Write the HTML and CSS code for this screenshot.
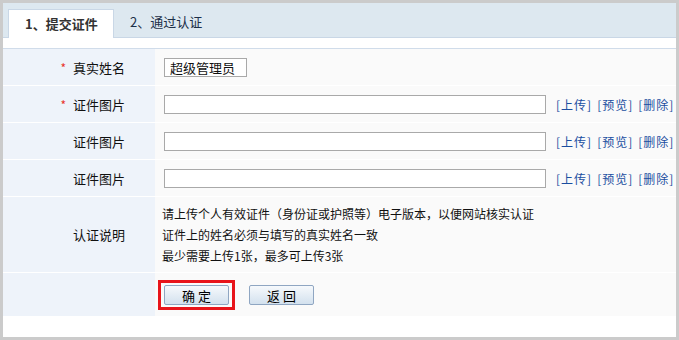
FILE: index.html
```html
<!DOCTYPE html>
<html lang="zh-CN">
<head>
  <meta charset="UTF-8" />
  <title>实名认证</title>
  <link rel="stylesheet" href="styles.css">
</head>
<body>
  <div class="panel">
    <div class="tabs">
      <div class="tab active">1、提交证件</div>
      <div class="tab">2、通过认证</div>
    </div>

    <div class="form">
      <div class="row">
        <div class="label"><span class="req">*</span>真实姓名</div>
        <div class="field"><input type="text" class="name-input" value="超级管理员"></div>
      </div>

      <div class="row">
        <div class="label"><span class="req">*</span>证件图片</div>
        <div class="field">
          <input type="text" class="file-input">
          <span class="links"><a href="#">[上传]</a><a href="#">[预览]</a><a href="#">[删除]</a></span>
        </div>
      </div>

      <div class="row">
        <div class="label">证件图片</div>
        <div class="field">
          <input type="text" class="file-input">
          <span class="links"><a href="#">[上传]</a><a href="#">[预览]</a><a href="#">[删除]</a></span>
        </div>
      </div>

      <div class="row">
        <div class="label">证件图片</div>
        <div class="field">
          <input type="text" class="file-input">
          <span class="links"><a href="#">[上传]</a><a href="#">[预览]</a><a href="#">[删除]</a></span>
        </div>
      </div>

      <div class="row tall">
        <div class="label">认证说明</div>
        <div class="field notes">
          <p>请上传个人有效证件（身份证或护照等）电子版本，以便网站核实认证</p>
          <p>证件上的姓名必须与填写的真实姓名一致</p>
          <p>最少需要上传1张，最多可上传3张</p>
        </div>
      </div>

      <div class="row actions">
        <div class="label"></div>
        <div class="field">
          <span class="highlight"><button class="btn">确 定</button></span>
          <button class="btn">返 回</button>
        </div>
      </div>
    </div>
  </div>
</body>
</html>
```

FILE: styles.css
```css
* {
  box-sizing: border-box;
  margin: 0;
  padding: 0;
}

html, body {
  height: 100%;
}

body {
  background: #cbcbcb;
  padding: 3px;
  font-family: "Noto Sans CJK SC", "DejaVu Sans", sans-serif;
  font-size: 12px;
  color: #222;
}

.panel {
  background: #fff;
  height: 334px;
}

/* tabs */
.tabs {
  height: 35px;
  background: #dde8f0;
  border-bottom: 1px solid #c9d7e6;
  display: flex;
  align-items: flex-end;
  padding-left: 5px;
}

.tab {
  height: 29px;
  line-height: 28px;
  padding: 0 16px;
  font-size: 13px;
  color: #1c2f48;
  white-space: nowrap;
}

.tab.active {
  width: 106px;
  padding: 0 0 0 16px;
  background: #fff;
  border: 1px solid #c9d7e6;
  border-bottom: none;
  margin-bottom: -1px;
  font-weight: bold;
  color: #333;
}

/* form */
.form {
  margin-top: 10px;
  border-top: 1px solid #d0dcea;
}

.row {
  display: grid;
  grid-template-columns: 152px 1fr;
  height: 37px;
  border-bottom: 1px solid #fff;
}

.row.tall {
  height: 76px;
}

.row.actions {
  height: 43px;
  border-bottom: none;
}

.label {
  background: #eef3fa;
  display: flex;
  align-items: center;
  justify-content: flex-end;
  padding-right: 30px;
  font-size: 13px;
  color: #111;
}

.req {
  color: #e8322c;
  font-size: 12px;
  margin-right: 7px;
}

.field {
  background: #fafafa;
  display: flex;
  align-items: center;
  padding-left: 9px;
  min-width: 0;
}

input {
  height: 19px;
  border: 1px solid #a9a9a9;
  background: #fff;
  font-family: inherit;
  font-size: 13px;
  color: #111;
  padding: 0 5px;
  outline: none;
}

.name-input {
  width: 83px;
}

.file-input {
  width: 382px;
  flex-shrink: 0;
}

.links {
  margin-left: 10px;
  display: flex;
  gap: 5px;
  white-space: nowrap;
  flex-shrink: 0;
}

.links a {
  color: #1a4ea0;
  text-decoration: none;
  font-size: 12px;
  letter-spacing: 1px;
}

.notes {
  flex-direction: column;
  align-items: flex-start;
  justify-content: center;
  padding-left: 7px;
  color: #111;
}

.notes p {
  line-height: 21px;
}

.highlight {
  display: inline-block;
  border: 3px solid #e8141a;
  padding: 2px 3px;
  margin-left: -6px;
  margin-right: 14px;
}

.btn {
  display: block;
  width: 65px;
  height: 20px;
  border: 1px solid #8fa6c2;
  border-radius: 2px;
  background: linear-gradient(#f6f9fc, #d3e1ee);
  font-family: inherit;
  font-size: 13px;
  color: #000;
  cursor: pointer;
}
```
